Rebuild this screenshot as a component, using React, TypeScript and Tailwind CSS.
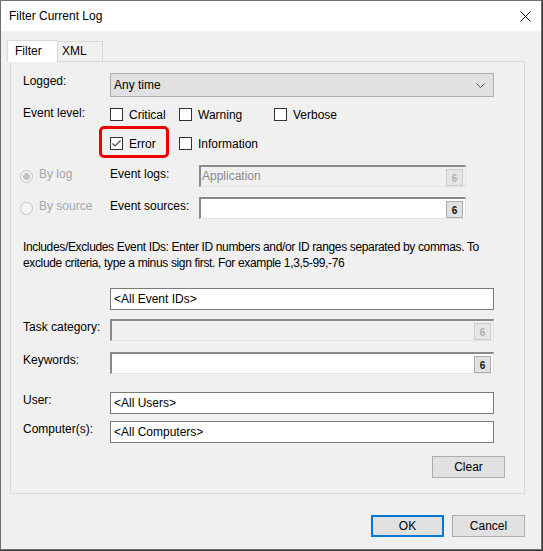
import React from "react";

// Small dropdown button shown inside the sunken pick fields
const PickButton = ({ disabled }: { disabled?: boolean }) => (
  <div
    className={`absolute right-[2px] top-[2px] w-[17px] h-[17px] border flex items-end justify-center text-[10px] font-bold leading-[13px] ${
      disabled
        ? "bg-[#e6e6e6] border-[#cccccc] text-[#b0b0b0]"
        : "bg-[#e1e1e1] border-[#adadad] text-[#101010]"
    }`}
  >
    6
  </div>
);

// 3D sunken field with picker, like the classic Win32 controls
const SunkenField = ({
  width,
  disabled,
  value,
}: {
  width: string;
  disabled?: boolean;
  value?: string;
}) => (
  <div
    className={`relative h-[22px] ${width} border-t-2 border-l-2 border-t-[#8a8a8a] border-l-[#8a8a8a] border-b border-r border-b-[#e3e3e3] border-r-[#e3e3e3] ${
      disabled ? "bg-[#f0f0f0]" : "bg-white"
    }`}
  >
    {value && (
      <span className="absolute left-[1px] top-[2px] text-[12px] leading-[15px] text-[#8a8a8a]">
        {value}
      </span>
    )}
    <PickButton disabled={disabled} />
  </div>
);

const TextField = ({ value }: { value: string }) => (
  <div className="h-[22px] w-[384px] border border-[#7a7a7a] bg-white flex items-center pl-[3px] text-[12px] text-black">
    {value}
  </div>
);

const CheckBox = ({ label, checked }: { label: string; checked?: boolean }) => (
  <div className="flex items-center">
    <div className="w-[13px] h-[13px] border border-[#333333] bg-white flex items-center justify-center">
      {checked && (
        <svg width="11" height="11" viewBox="0 0 11 11">
          <path d="M1.5 5.5 L4 8 L9.5 2.5" fill="none" stroke="#444444" strokeWidth="1.1" />
        </svg>
      )}
    </div>
    <span className="ml-[6px] text-[12px] text-black">{label}</span>
  </div>
);

const Radio = ({ label, checked }: { label: string; checked?: boolean }) => (
  <div className="flex items-center w-[90px]">
    <div className="w-[13px] h-[13px] rounded-full border border-[#c4c4c4] bg-[#f4f4f4] flex items-center justify-center">
      {checked && <div className="w-[7px] h-[7px] rounded-full bg-[#c4c4c4]" />}
    </div>
    <span className="ml-[6px] -mt-[5px] text-[12px] text-[#a8a8a8]">{label}</span>
  </div>
);

const Label = ({ text }: { text: string }) => (
  <div className="w-[87px] pt-[1px] text-[12px] leading-[15px] text-black">{text}</div>
);

const Button = ({ text, primary }: { text: string; primary?: boolean }) => (
  <div
    className={`w-[73px] h-[22px] flex items-center justify-center bg-[#e1e1e1] text-[12px] text-black ${
      primary ? "border-2 border-[#0078d7]" : "border border-[#adadad]"
    }`}
  >
    {text}
  </div>
);

export default function App() {
  return (
    <div
      className="w-[543px] h-[551px] bg-[#3a3a3a] overflow-hidden"
      style={{ fontFamily: '"Segoe UI", "Liberation Sans", Arial, sans-serif' }}
    >
      <div className="w-[542px] h-[550px] border border-[#6f6f6f] bg-[#f0f0f0] flex flex-col">
        {/* Title bar */}
        <div className="h-[30px] bg-white flex items-center justify-between pl-[8px] pr-[10px]">
          <span className="text-[12px] text-black">Filter Current Log</span>
          <svg width="11" height="11" viewBox="0 0 11 11">
            <path d="M0.5 0.5 L10.5 10.5 M10.5 0.5 L0.5 10.5" stroke="#111111" strokeWidth="1" />
          </svg>
        </div>

        {/* Tabs */}
        <div className="flex items-end h-[30px] pl-[6px]">
          <div className="relative z-10 w-[51px] h-[22px] bg-white border border-b-0 border-[#d9d9d9] pl-[7px] text-[12px] leading-[20px] text-black -mb-px">
            Filter
          </div>
          <div className="w-[45px] h-[20px] bg-[#f0f0f0] border border-b-0 border-l-0 border-[#d9d9d9] pl-[4px] text-[12px] leading-[19px] text-black">
            XML
          </div>
        </div>

        {/* Tab panel */}
        <div className="ml-[9px] w-[515px] h-[433px] border border-[#d9d9d9] bg-[#f0f0f0] pl-[12px] pt-[11px]">
          <div className="flex items-start">
            <Label text="Logged:" />
            <div className="h-[24px] w-[384px] border border-[#adadad] bg-[#e1e1e1] flex items-center justify-between pl-[3px] pr-[8px] text-[12px] text-black">
              <span>Any time</span>
              <svg width="9" height="5" viewBox="0 0 9 5">
                <path d="M0.5 0.5 L4.5 4.5 L8.5 0.5" fill="none" stroke="#555555" strokeWidth="1" />
              </svg>
            </div>
          </div>

          <div className="flex items-start mt-[8px] h-[19px]">
            <Label text="Event level:" />
            <div className="flex items-center h-[19px]">
              <div className="w-[69px]">
                <CheckBox label="Critical" />
              </div>
              <div className="w-[95px]">
                <CheckBox label="Warning" />
              </div>
              <CheckBox label="Verbose" />
            </div>
          </div>

          <div className="flex items-center mt-[10px] h-[19px] pl-[87px]">
            <div className="relative w-[69px]">
              <div className="absolute left-[-11px] top-[-9px] w-[70px] h-[32px] rounded-[5px] border-[3px] border-[#ee0000]" />
              <CheckBox label="Error" checked />
            </div>
            <CheckBox label="Information" />
          </div>

          <div className="flex items-center mt-[12px] -ml-[3px]">
            <Radio label="By log" checked />
            <span className="w-[89px] -mt-[4px] text-[12px] text-black">Event logs:</span>
            <SunkenField width="w-[267px]" disabled value="Application" />
          </div>

          <div className="flex items-center mt-[10px] -ml-[3px]">
            <Radio label="By source" />
            <span className="w-[89px] -mt-[4px] text-[12px] text-black">Event sources:</span>
            <SunkenField width="w-[267px]" />
          </div>

          <div className="mt-[20px] text-[12px] leading-[16px] tracking-[-0.35px] text-black whitespace-nowrap">
            Includes/Excludes Event IDs: Enter ID numbers and/or ID ranges separated by commas. To
            <br />
            exclude criteria, type a minus sign first. For example 1,3,5-99,-76
          </div>

          <div className="flex items-start mt-[17px]">
            <Label text="" />
            <TextField value="<All Event IDs>" />
          </div>

          <div className="flex items-start mt-[9px]">
            <Label text="Task category:" />
            <SunkenField width="w-[384px]" disabled />
          </div>

          <div className="flex items-start mt-[11px]">
            <Label text="Keywords:" />
            <SunkenField width="w-[384px]" />
          </div>

          <div className="flex items-start mt-[18px]">
            <Label text="User:" />
            <TextField value="<All Users>" />
          </div>

          <div className="flex items-start mt-[7px]">
            <Label text="Computer(s):" />
            <TextField value="<All Computers>" />
          </div>

          <div className="flex justify-end mt-[13px] pr-[19px]">
            <Button text="Clear" />
          </div>
        </div>

        {/* Dialog buttons */}
        <div className="flex justify-end gap-[8px] mt-[21px] pr-[16px]">
          <Button text="OK" primary />
          <Button text="Cancel" />
        </div>
      </div>
    </div>
  );
}
